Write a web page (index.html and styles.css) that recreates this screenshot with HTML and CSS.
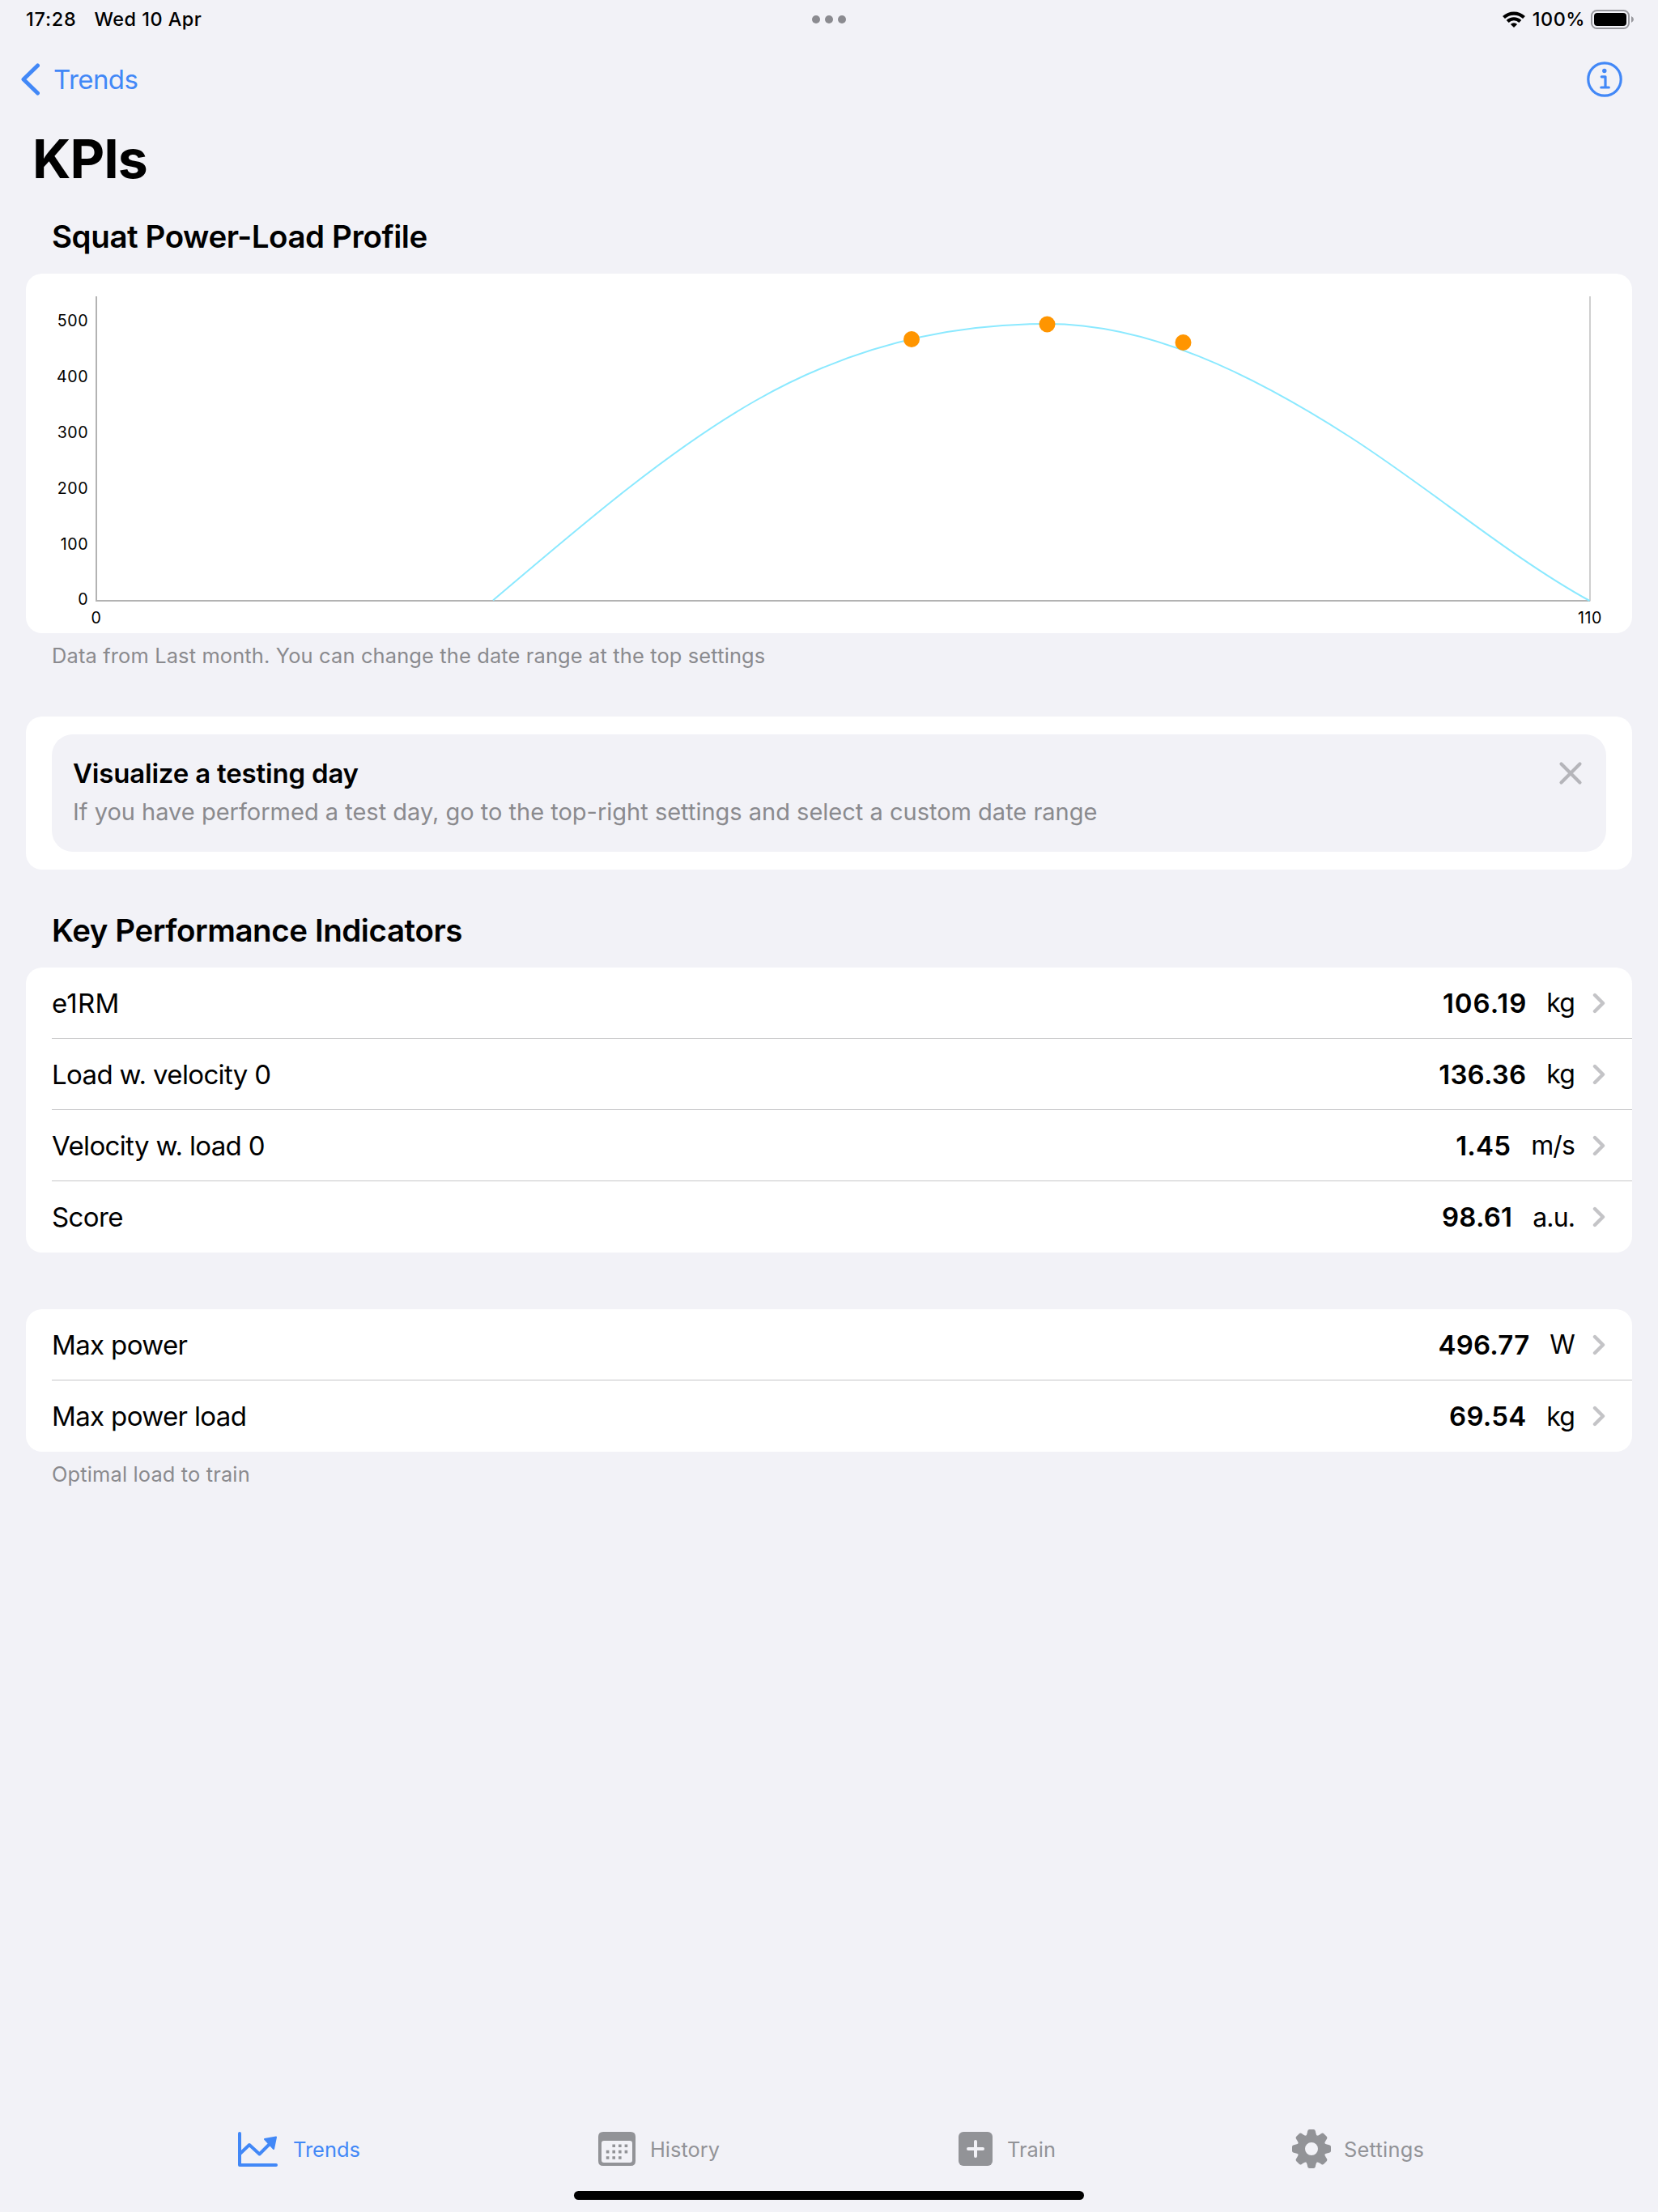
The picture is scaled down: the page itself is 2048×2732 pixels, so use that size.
FILE: index.html
```html
<!doctype html>
<html lang="en">
<head>
  <meta charset="utf-8" />
  <title>KPIs</title>
  <link rel="stylesheet" href="styles.css">
</head>
<body>
  <div class="status">
    <div class="status-left">
      <span class="time">17:28</span>
      <span class="date">Wed 10 Apr</span>
    </div>
    <div class="dots"><i></i><i></i><i></i></div>
    <div class="status-right">
      <svg class="wifi" width="28" height="20" viewBox="0 0 28 20">
        <g fill="none" stroke="#000" stroke-width="4.2">
          <path d="M1.5 7.6A18 18 0 0 1 26.5 7.6" />
          <path d="M6.2 12.4A11.2 11.2 0 0 1 21.8 12.4" />
        </g>
        <path d="M14 20L9.9 15.9A6 6 0 0 1 18.1 15.9Z" />
      </svg>
      <span class="percent">100%</span>
      <svg class="battery" width="54" height="24" viewBox="0 0 54 24">
        <rect x="1" y="1" width="46" height="22" rx="6.5" fill="none" stroke="#98989d" stroke-width="2" />
        <rect x="4" y="4" width="40" height="16" rx="4" />
        <path d="M50 8Q53 9.500 53 12T50 16Z" fill="#98989d" />
      </svg>
    </div>
  </div>

  <div class="nav">
    <a class="back">
      <svg width="23" height="40" viewBox="0 0 23 40"><path d="M20.500 3L3 20L20.500 37" /></svg>
      <span>Trends</span>
    </a>
    <svg class="info" width="44" height="44" viewBox="0 0 44 44">
      <circle cx="22" cy="22" r="20.200" />
      <path d="M18.300 18.800H23V31.800M17.800 32H27.300" />
      <circle class="tittle" cx="21.800" cy="11.500" r="2.700" />
    </svg>
  </div>

  <h1>KPIs</h1>

  <h2 class="first">Squat Power-Load Profile</h2>
  <div class="card chart">
    <svg width="1984" height="444" viewBox="32 338 1984 444">
      <g class="axis">
        <path d="M119 366V742.500" />
        <path class="right" d="M1964 366V742.500" />
        <path d="M118 742H1964" />
      </g>
      <path class="curve" d="M609 741.500C717 649.700 825 556.700 933 495C1053 426.500 1173 400 1293 400C1418 400 1543 459.600 1668 540C1766.500 603.300 1865 687.800 1963.500 742" />
      <g class="points">
        <circle cx="1126" cy="419" r="10" />
        <circle cx="1293.500" cy="400.500" r="10" />
        <circle cx="1461.500" cy="423" r="10" />
      </g>
      <g class="y-labels">
        <text x="109" y="403">500</text>
        <text x="109" y="472">400</text>
        <text x="109" y="541">300</text>
        <text x="109" y="610">200</text>
        <text x="109" y="679">100</text>
        <text x="109" y="747">0</text>
      </g>
      <g class="x-labels">
        <text x="119" y="770">0</text>
        <text x="1964" y="770">110</text>
      </g>
    </svg>
  </div>
  <p class="caption">Data from Last month. You can change the date range at the top settings</p>

  <div class="card note-card">
    <div class="note">
      <div>
        <h3>Visualize a testing day</h3>
        <p>If you have performed a test day, go to the top-right settings and select a custom date range</p>
      </div>
      <svg class="close" width="30" height="30" viewBox="0 0 30 30"><path d="M3.500 3.500L26.500 26.500M26.500 3.500L3.500 26.500" /></svg>
    </div>
  </div>

  <h2>Key Performance Indicators</h2>
  <ul class="card list">
    <li class="e1rm"><span class="name">e1RM</span><b>106.19</b><span class="unit">kg</span><svg width="16" height="26" viewBox="0 0 16 26"><path d="M3 3L13 13L3 23" /></svg></li>
    <li><span class="name">Load w. velocity 0</span><b>136.36</b><span class="unit">kg</span><svg width="16" height="26" viewBox="0 0 16 26"><path d="M3 3L13 13L3 23" /></svg></li>
    <li><span class="name">Velocity w. load 0</span><b>1.45</b><span class="unit">m/s</span><svg width="16" height="26" viewBox="0 0 16 26"><path d="M3 3L13 13L3 23" /></svg></li>
    <li><span class="name">Score</span><b>98.61</b><span class="unit">a.u.</span><svg width="16" height="26" viewBox="0 0 16 26"><path d="M3 3L13 13L3 23" /></svg></li>
  </ul>

  <ul class="card list second">
    <li><span class="name">Max power</span><b>496.77</b><span class="unit">W</span><svg width="16" height="26" viewBox="0 0 16 26"><path d="M3 3L13 13L3 23" /></svg></li>
    <li><span class="name">Max power load</span><b>69.54</b><span class="unit">kg</span><svg width="16" height="26" viewBox="0 0 16 26"><path d="M3 3L13 13L3 23" /></svg></li>
  </ul>
  <p class="caption">Optimal load to train</p>

  <div class="tabbar">
    <a class="tab active">
      <svg width="49" height="48" viewBox="0 0 49 48">
        <g fill="none" stroke="currentColor" stroke-width="4" stroke-linecap="round" stroke-linejoin="round">
          <path d="M2 5V44H47" />
          <path d="M2 30.500L14 19L26.500 30.500L40 17" />
        </g>
        <path d="M33 12L47 9.500L44 24Z" fill="currentColor" stroke="currentColor" stroke-width="2" stroke-linejoin="round" />
      </svg>
      <span>Trends</span>
    </a>
    <a class="tab">
      <svg width="46" height="48" viewBox="0 0 46 48">
        <path fill="currentColor" fill-rule="evenodd" d="M6 3H40Q46 3 46 9V39Q46 45 40 45H6Q0 45 0 39V9Q0 3 6 3ZM7 14Q4 14 4 17V38Q4 41 7 41H39Q42 41 42 38V17Q42 14 39 14Z" />
        <g fill="none" stroke="currentColor" stroke-width="3.600" stroke-dasharray="3.600 4">
          <path d="M17.400 20.200H36.200" />
          <path d="M9.800 27.600H36.200" />
          <path d="M9.800 35H28.600" />
        </g>
      </svg>
      <span>History</span>
    </a>
    <a class="tab">
      <svg width="42" height="48" viewBox="0 0 42 48">
        <rect x="0" y="3" width="42" height="42" rx="6" fill="currentColor" />
        <path d="M12 24H30M21 15V33" stroke="#f2f2f7" stroke-width="4" stroke-linecap="round" />
      </svg>
      <span>Train</span>
    </a>
    <a class="tab settings">
      <svg width="48" height="48" viewBox="-24 -24 48 48">
        <g fill="currentColor">
          <path fill-rule="evenodd" d="M-17 0A17 17 0 1 0 17 0A17 17 0 1 0 -17 0ZM-8 0A8 8 0 1 1 8 0A8 8 0 1 1 -8 0Z" />
          <g id="teeth">
            <path id="tooth" d="M-7.500 -15.500Q-5.600 -17 -5.200 -20L-4.800 -22Q-4.400 -24 -2.500 -24H2.500Q4.400 -24 4.800 -22L5.200 -20Q5.600 -17 7.500 -15.500Z" />
            <use href="#tooth" transform="rotate(90)" />
            <use href="#tooth" transform="rotate(180)" />
            <use href="#tooth" transform="rotate(270)" />
          </g>
          <use href="#teeth" transform="rotate(45)" />
        </g>
      </svg>
      <span>Settings</span>
    </a>
  </div>
  <div class="home"></div>
</body>
</html>
```
FILE: styles.css
```css
:root{
  --accent:#4288f7;
  --bg:#f2f2f7;
  --gray:#8a8a8e;
  --line:#c6c6c8;
}

*{ box-sizing:border-box; }
body{
  display:flex;
  flex-direction:column;
  width:2048px;
  height:2732px;
  margin:0;
  background:var(--bg);
  color:#000;
  font-family:Inter,"Liberation Sans",sans-serif;
  font-size:33px;
  overflow:hidden;
}
h1,h2,h3,p,ul{ margin:0; padding:0; }
svg{ display:block; flex:none; }

/* status bar */
.status{
  display:grid;
  grid-template-columns:1fr auto 1fr;
  align-items:center;
  height:47px;
  padding:0 29px;
  font-size:23.4px;
  font-weight:500;
  letter-spacing:.5px;
}
.status-left{ display:flex; gap:22px; padding-left:3px; }
.time{ letter-spacing:.8px; }
.dots{ display:flex; gap:6px; }
.dots i{ width:10px; height:10px; border-radius:50%; background:#8b8b90; }
.status-right{ display:flex; align-items:center; justify-content:flex-end; }
.percent{ margin:0 7px 0 9px; }

/* navigation */
.nav{
  display:flex;
  align-items:center;
  justify-content:space-between;
  height:102px;
  padding:0 44px 0 26px;
  color:var(--accent);
}
.back{ display:flex; align-items:center; gap:17px; letter-spacing:-.55px; }
.back svg path{ fill:none; stroke:var(--accent); stroke-width:5; stroke-linecap:round; stroke-linejoin:round; }
.info{ fill:none; stroke:var(--accent); stroke-width:3.2; stroke-linecap:round; stroke-linejoin:round; }
.info .tittle{ fill:var(--accent); stroke:none; }

h1{
  height:94px;
  padding-left:40px;
  line-height:94px;
  font-size:66px;
  font-weight:700;
  letter-spacing:-1px;
}
h2{
  height:121px;
  padding:45px 64px 0;
  line-height:60px;
  font-size:38.5px;
  font-weight:600;
  letter-spacing:-.42px;
}
h2.first{ height:95px; padding-top:19px; }

/* cards */
.card{
  flex:none;
  margin:0 32px;
  border-radius:20px;
  background:#fff;
  overflow:hidden;
}
.caption{
  height:56px;
  padding-left:64px;
  line-height:56px;
  font-size:25.4px;
  letter-spacing:.16px;
  color:var(--gray);
}

/* chart */
.axis path{ fill:none; stroke:#b3b3b3; stroke-width:2; }
.axis .right{ stroke:#cfcfcf; }
.curve{ fill:none; stroke:#8be9ff; stroke-width:2; }
.points{ fill:#ff9500; }
.chart text{ font-size:19.6px; letter-spacing:.5px; }
.y-labels{ text-anchor:end; }
.x-labels{ text-anchor:middle; }

/* note */
.note-card{ margin-top:47px; padding:22px 32px; }
.note{
  display:flex;
  justify-content:space-between;
  height:145px;
  padding:24px 29px 0 26px;
  border-radius:26px;
  background:var(--bg);
}
.note h3{ font-size:33px; line-height:48px; font-weight:600; letter-spacing:-.19px; }
.note p{ font-size:29px; line-height:47px; color:var(--gray); }
.close{ margin-top:9px; }
.close path{ stroke:#b5b5ba; stroke-width:4.2; stroke-linecap:round; }

/* indicator rows */
.list{ padding-left:32px; list-style:none; }
.list.second{ margin-top:70px; }
.list li{
  display:flex;
  align-items:center;
  height:88px;
  padding-right:33px;
  border-bottom:1px solid var(--line);
}
.list li:last-child{ border-bottom:none; }
.name{ flex:1; letter-spacing:-.64px; }
.list b{ margin-right:25px; font-weight:600; letter-spacing:.2px; }
.e1rm .name{ letter-spacing:.2px; }
.e1rm b{ letter-spacing:1px; margin-right:24px; }
.unit{ margin-right:22px; font-size:32px; letter-spacing:-.9px; }
.list svg path{ fill:none; stroke:#c4c4c7; stroke-width:4.4; stroke-linecap:round; stroke-linejoin:round; }

/* tab bar */
.tabbar{
  display:grid;
  grid-template-columns:445px 445px 412px auto;
  margin-top:auto;
  padding-left:294px;
  height:48px;
  font-size:25.4px;
  color:#929397;
}
.tab{ display:flex; align-items:center; gap:18px; }
.tab.active{ gap:19px; color:var(--accent); }
.tab.settings{ gap:16px; letter-spacing:.25px; }
.home{
  flex:none;
  width:630px;
  height:11px;
  margin:28px auto 15px;
  border-radius:6px;
  background:#000;
}
```
